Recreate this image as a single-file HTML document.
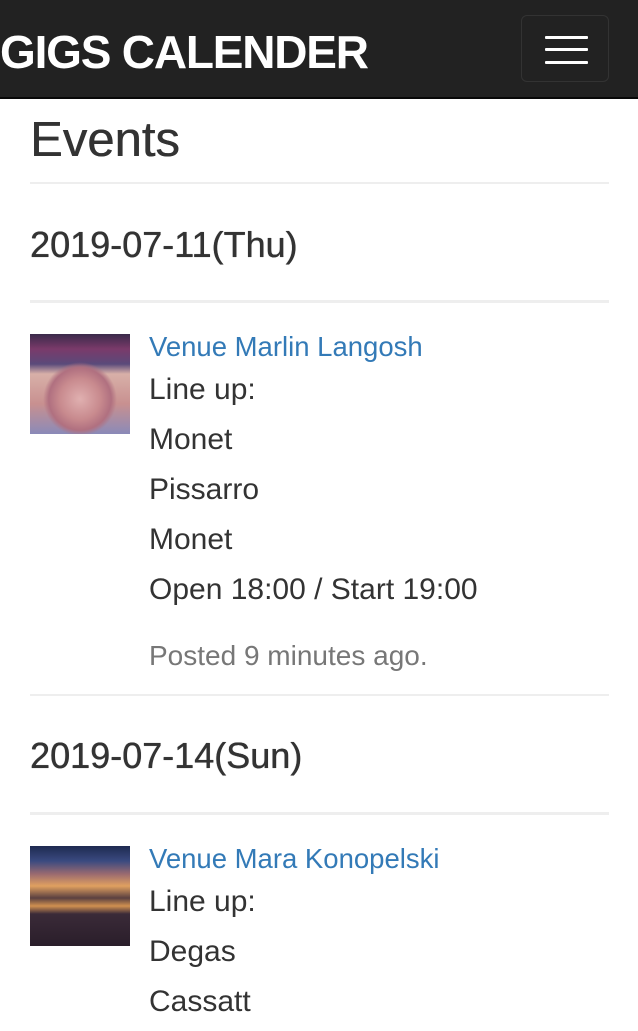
<!DOCTYPE html>
<html><head><meta charset="utf-8"><style>
*{margin:0;padding:0;box-sizing:border-box}
body{width:638px;height:1031px;overflow:hidden;background:#fff;font-family:"Liberation Sans",Arial,sans-serif;color:#333;position:relative}
.a{position:absolute;line-height:1;white-space:nowrap}
.nav{position:absolute;left:0;top:0;width:638px;height:99px;background:#222;border-bottom:2px solid #080808}
.btn{position:absolute;left:521px;top:15px;width:88px;height:67px;border:1px solid #333;border-radius:6px}
.bar{position:absolute;left:23px;width:43px;height:3px;background:#fff;border-radius:1px}
.hr{position:absolute;left:30px;width:579px;background:#eee}
.l{font-size:30px;left:149px}
.v{font-size:27.5px;left:149px;color:#337ab7}
.d{font-size:36px;left:30px;text-shadow:0 0 0.6px #333,0.3px 0 0 #333}
</style></head><body>
<div class="nav">
<div class="a" style="left:0;top:29px;font-size:46px;font-weight:bold;color:#fff;letter-spacing:-1.2px">GIGS CALENDER</div>
<div class="btn"><div class="bar" style="top:20px"></div><div class="bar" style="top:32px"></div><div class="bar" style="top:45px"></div></div>
</div>
<div class="a" style="left:30px;top:116px;font-size:49px;text-shadow:0.4px 0 0 #333">Events</div>
<div class="hr" style="top:182px;height:2px"></div>
<div class="a d" style="top:227px">2019-07-11(Thu)</div>
<div class="hr" style="top:300px;height:3px"></div>
<div style="position:absolute;left:30px;top:334px;width:100px;height:100px;background:radial-gradient(circle at 50% 65%,#e0b0b0 0,#c88a8e 25%,#b07080 38%,transparent 45%),linear-gradient(180deg,#3a2a4a 0,#7a3a6a 15%,#5a4a7a 30%,#d8b0a8 40%,#c89090 70%,#8a8ab8 100%)"></div>
<div class="a v" style="top:333px">Venue Marlin Langosh</div>
<div class="a l" style="top:375px">Line up:</div>
<div class="a l" style="top:425px">Monet</div>
<div class="a l" style="top:475px">Pissarro</div>
<div class="a l" style="top:525px">Monet</div>
<div class="a l" style="top:575px">Open 18:00 / Start 19:00</div>
<div class="a" style="left:149px;top:642px;font-size:28px;color:#777">Posted 9 minutes ago.</div>
<div class="hr" style="top:694px;height:2px"></div>
<div class="a d" style="top:738px">2019-07-14(Sun)</div>
<div class="hr" style="top:812px;height:3px"></div>
<div style="position:absolute;left:30px;top:846px;width:100px;height:100px;background:linear-gradient(180deg,#1e2a50 0,#3a4a80 15%,#9a6a70 28%,#e0a060 40%,#5a4040 52%,#d09050 60%,#3a2a38 68%,#2a1e2a 100%)"></div>
<div class="a v" style="top:845px">Venue Mara Konopelski</div>
<div class="a l" style="top:887px">Line up:</div>
<div class="a l" style="top:937px">Degas</div>
<div class="a l" style="top:987px">Cassatt</div>
</body></html>
